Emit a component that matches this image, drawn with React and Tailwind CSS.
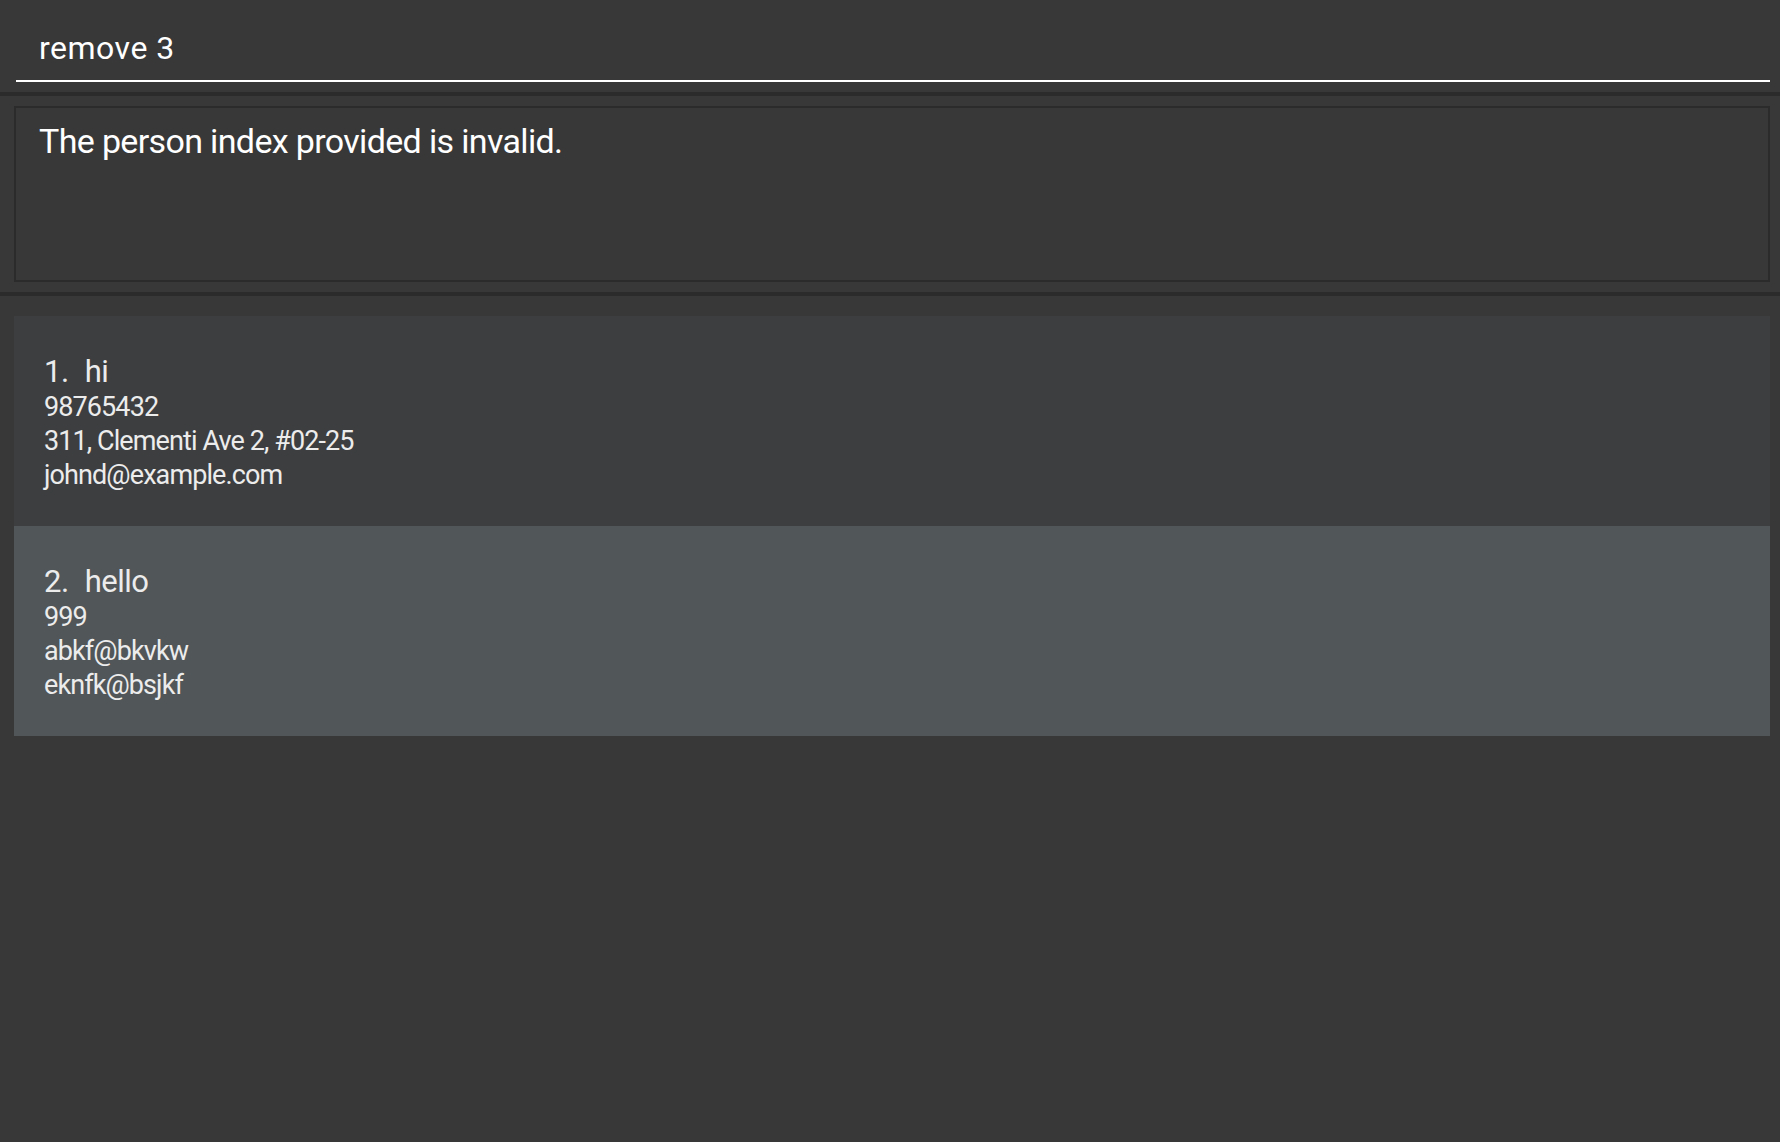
import React from "react";

const persons = [
  {
    name: "hi",
    fields: ["98765432", "311, Clementi Ave 2, #02-25", "johnd@example.com"],
  },
  {
    name: "hello",
    fields: ["999", "abkf@bkvkw", "eknfk@bsjkf"],
  },
];

const font = { fontFamily: "Roboto, 'Noto Sans', sans-serif" };

const PersonCard = ({ person, index }) => {
  // odd rows are the darker ones, even rows are lighter
  const bg = index % 2 === 0 ? "bg-[#3c3e40]" : "bg-[#515658]";
  return (
    <div className={`${bg} h-[210px] pl-[30px] pt-[37px] text-[#ececec]`}>
      <div className="flex gap-[16px] text-[31px] leading-[37px] tracking-[-0.5px]">
        <span>{index + 1}.</span>
        <span>{person.name}</span>
      </div>
      {person.fields.map((field) => (
        <div key={field} className="text-[27px] leading-[34px] tracking-[-0.9px]">
          {field}
        </div>
      ))}
    </div>
  );
};

const App = () => {
  return (
    <div className="h-[1142px] bg-[#383838] flex flex-col" style={font}>
      {/* command box */}
      <div className="pt-[28px] pl-[16px] pr-[10px]">
        <div className="pl-[23px] text-[32px] leading-[40px] tracking-[0.5px] text-white">
          remove 3
        </div>
        <div className="mt-[12px] h-[2px] bg-white"></div>
      </div>

      <div className="mt-[10px] h-[4px] bg-[#2b2b2b]"></div>

      {/* result display */}
      <div className="mt-[10px] ml-[14px] mr-[10px] h-[176px] border-2 border-[#2b2b2b] pt-[12px] pl-[23px]">
        <p className="text-[34px] leading-[42px] tracking-[-0.65px] text-white">
          The person index provided is invalid.
        </p>
      </div>

      <div className="mt-[10px] h-[4px] bg-[#2b2b2b]"></div>

      {/* person list */}
      <div className="mt-[20px] ml-[14px] mr-[10px] flex flex-col">
        {persons.map((person, index) => (
          <PersonCard key={person.name} person={person} index={index} />
        ))}
      </div>
    </div>
  );
};

export default App;
